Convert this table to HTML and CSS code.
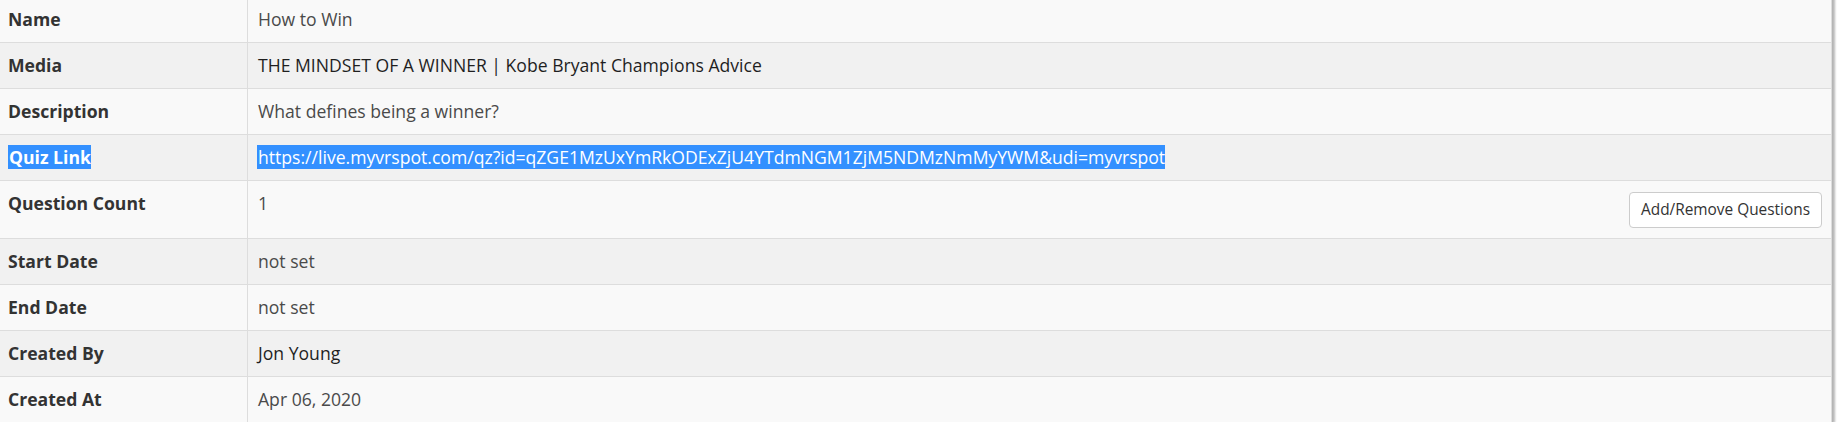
FILE: index.html
```html
<!DOCTYPE html>
<html>
<head>
<meta charset="utf-8">
<link rel="stylesheet" href="styles.css">
</head>
<body>
<div class="panel">
  <table class="details">
    <tr class="odd">
      <th>Name</th>
      <td>How to Win</td>
    </tr>
    <tr class="even">
      <th>Media</th>
      <td class="media">THE MINDSET OF A WINNER | Kobe Bryant Champions Advice</td>
    </tr>
    <tr class="odd">
      <th>Description</th>
      <td>What defines being a winner?</td>
    </tr>
    <tr class="even">
      <th><span class="sel">Quiz Link</span></th>
      <td><span class="sel">https://live.myvrspot.com/qz?id=qZGE1MzUxYmRkODExZjU4YTdmNGM1ZjM5NDMzNmMyYWM&amp;udi=myvrspot</span></td>
    </tr>
    <tr class="odd">
      <th>Question Count</th>
      <td><button class="btn">Add/Remove Questions</button>1</td>
    </tr>
    <tr class="even">
      <th>Start Date</th>
      <td>not set</td>
    </tr>
    <tr class="odd">
      <th>End Date</th>
      <td>not set</td>
    </tr>
    <tr class="even">
      <th>Created By</th>
      <td class="dark">Jon Young</td>
    </tr>
    <tr class="odd">
      <th>Created At</th>
      <td>Apr 06, 2020</td>
    </tr>
  </table>
</div>
</body>
</html>
```

FILE: styles.css
```css
html, body {
  margin: 0;
  padding: 0;
  background: #ffffff;
  overflow: hidden;
}

body {
  font-family: "Open Sans", "Liberation Sans", sans-serif;
  font-size: 17.6px;
  line-height: 24px;
  color: #333333;
}

.panel {
  width: 1832px;
  margin-top: -4px;
  border-right: 1px solid #b5b5b5;
  box-shadow: 2px 0 2px rgba(0, 0, 0, 0.28);
}

.details {
  width: 100%;
  border-collapse: collapse;
}

.details th,
.details td {
  padding: 10px 8px 11px 8px;
  border: 1px solid #dddddd;
  vertical-align: top;
  text-align: left;
}

.details th {
  width: 231px;
  font-weight: 700;
  color: #333333;
  border-left: none;
}

.details td {
  padding-left: 10px;
  font-weight: 400;
  color: #4a4a4a;
}

.details td.media,
.details td.dark {
  color: #1f1f1f;
}

.odd {
  background: #f9f9f9;
}

.even {
  background: #f1f1f1;
}

.sel {
  display: inline-block;
  background: #3390ff;
  color: #ffffff;
  line-height: 24px;
  padding-left: 1px;
  margin-right: -1px;
}

.details td .sel {
  margin-left: -1px;
}

.btn {
  float: right;
  height: 36px;
  margin: 1px 1px -1px 0;
  padding: 0 11px;
  font-family: "Open Sans", "Liberation Sans", sans-serif;
  font-size: 15.4px;
  line-height: 20px;
  color: #333333;
  background: #ffffff;
  border: 1px solid #cccccc;
  border-radius: 4px;
}
```
